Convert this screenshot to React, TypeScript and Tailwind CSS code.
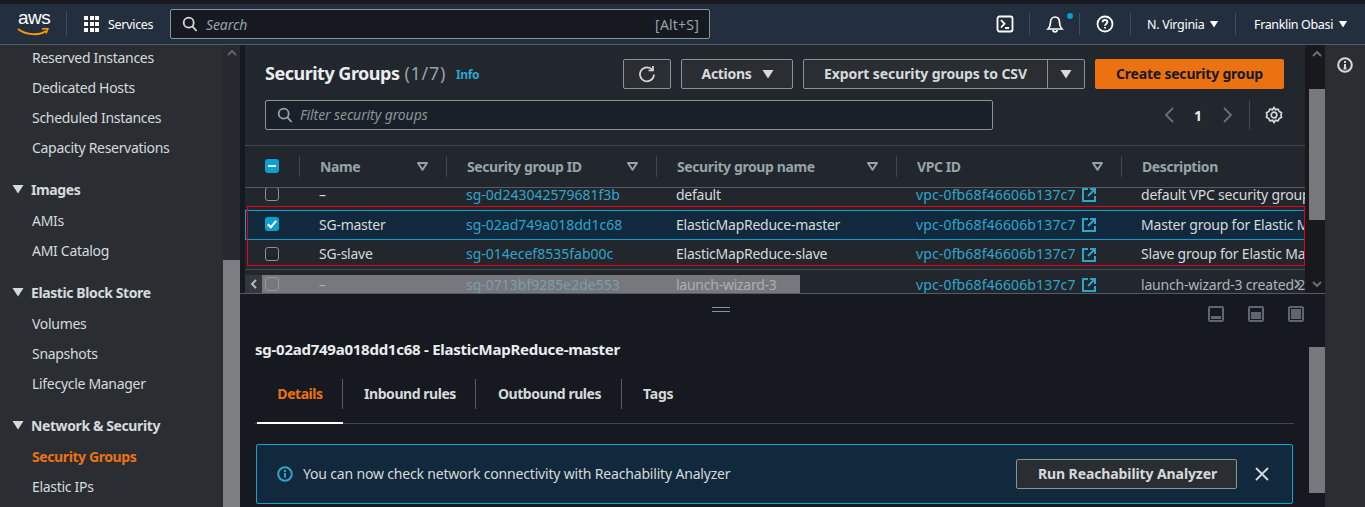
import React from "react";

const Tri = ({ className = "" }: { className?: string }) => (
  <svg width="12" height="10" viewBox="0 0 12 10" className={className}>
    <path d="M0.5 1h11L6 9.5z" fill="currentColor" />
  </svg>
);
const FilterTri = () => (
  <svg width="11" height="9" viewBox="0 0 11 9" className="text-[#95a5a6]">
    <path d="M1 1h9L5.5 7.8z" fill="none" stroke="currentColor" strokeWidth="2" strokeLinejoin="round" />
  </svg>
);
const SearchIcon = ({ c = "text-[#d5dbdb]" }: { c?: string }) => (
  <svg width="16" height="16" viewBox="0 0 16 16" className={c} fill="none" stroke="currentColor" strokeWidth="1.8">
    <circle cx="6.7" cy="6.7" r="5" />
    <path d="M10.4 10.4l4.2 4.6" />
  </svg>
);
const Ext = () => (
  <svg width="14" height="14" viewBox="0 0 14 14" fill="none" stroke="currentColor" strokeWidth="2" className="ml-[6px] mt-[2px] shrink-0">
    <path d="M6 1H1v12h12V8" />
    <path d="M8 1h5v5M13 1L6 8" />
  </svg>
);
const Check = ({ state }: { state: "off" | "on" | "mixed" }) => {
  if (state === "off")
    return <span className="block w-[14px] h-[14px] rounded-[3px] border border-[#879596] bg-transparent" />;
  return (
    <span className="flex items-center justify-center w-[14px] h-[14px] rounded-[3px] bg-[#0aa0d0]">
      <svg width="12" height="12" viewBox="0 0 12 12" fill="none" stroke="#fff" strokeWidth="2">
        {state === "on" ? <path d="M1.8 6.2l3 3 5.4-6.4" /> : <path d="M2 6h8" />}
      </svg>
    </span>
  );
};

const Item = ({ children, active }: { children: React.ReactNode; active?: boolean }) => (
  <div className={`h-[30px] flex items-center pl-[32px] text-[14px] whitespace-nowrap ${active ? "text-[#ec7211] font-bold tracking-[-0.4px]" : "text-[#d5dbdb] tracking-[-0.3px]"}`}>
    {children}
  </div>
);
const Section = ({ title, items, active }: { title: string; items: string[]; active?: string }) => (
  <div className="mt-[12px]">
    <div className="h-[30px] flex items-center pl-[12px] gap-[7px] text-[14px] font-bold text-[#d5dbdb] mb-[1px] tracking-[-0.4px]">
      <Tri className="text-[#d5dbdb] shrink-0" />
      <span className="whitespace-nowrap">{title}</span>
    </div>
    {items.map((i) => (
      <Item key={i} active={i === active}>{i}</Item>
    ))}
  </div>
);

const COLS = "grid grid-cols-[55px_147px_210px_240px_225px_300px]";
const COLS_SEL = "grid grid-cols-[54px_147px_210px_240px_225px_300px]";
const HeadCell = ({ label, divider = true }: { label: string; divider?: boolean }) => (
  <div className="relative flex items-center h-full pl-[20px] pr-[19px] justify-between">
    <span className="text-[14px] font-bold text-[#95a5a6] whitespace-nowrap tracking-[-0.4px]">{label}</span>
    {divider && <FilterTri />}
    <span className="absolute right-0 top-[10px] h-[21px] w-px bg-[#414750]" />
  </div>
);

const Row = ({
  name, id, gname, desc, state = "off", faded, selected, short,
}: { name: string; id: string; gname: string; desc: string; state?: "off" | "on"; faded?: boolean; selected?: boolean; short?: boolean }) => (
  <div className={`${selected ? COLS_SEL : COLS} w-[1177px] ${short ? "h-[29px]" : "h-[30px]"} pb-[2px] items-center text-[14px] whitespace-nowrap ${selected ? "bg-[#12283d] border-y border-l border-[#0aa0d0]" : ""}`}>
    <div className={selected ? "pl-[19px]" : "pl-[20px]"}><Check state={state} /></div>
    <div className="pl-[19px] text-[#d5dbdb] tracking-[-0.25px]">{name}</div>
    <div className="pl-[19px] text-[#2ea6cc] tracking-[0px]">{id}</div>
    <div className="pl-[19px] text-[#d5dbdb] tracking-[-0.25px]">{gname}</div>
    <div className="pl-[19px] flex items-center text-[#2ea6cc] tracking-[0.14px]">vpc-0fb68f46606b137c7<Ext /></div>
    <div className={`pl-[19px] tracking-[-0.2px] ${faded ? "text-[#aab7b8]" : "text-[#d5dbdb]"}`}>{desc}</div>
  </div>
);

const Btn = ({ children, className = "" }: { children: React.ReactNode; className?: string }) => (
  <div className={`h-[30px] flex items-center justify-center border border-[#879596] rounded-[2px] bg-[#2a2e33] text-[14px] font-bold text-[#d5dbdb] whitespace-nowrap ${className}`}>
    {children}
  </div>
);

const NavSep = () => <span className="block w-px h-[22px] bg-[#414d5c]" />;

export default function App() {
  return (
    <div className="w-[1365px] h-[507px] overflow-hidden flex flex-col bg-[#16191f] font-['Noto_Sans','Open_Sans',sans-serif] tracking-[-0.1px]">
      <div className="h-[4px] bg-[#16191f] shrink-0" />
      {/* top navigation */}
      <div className="h-[41px] shrink-0 bg-[#232f3e] border-b border-[#545b64] flex items-center text-white">
        <div className="relative w-[67px] h-full shrink-0">
          <span className="absolute left-[18px] top-[2px] text-[19px] leading-[24px] font-['Liberation_Sans',sans-serif] tracking-[-0.5px]">aws</span>
          <svg width="32" height="10" viewBox="0 0 32 10" className="absolute left-[17px] top-[24px]">
            <path d="M1 1c8 6 21 7 28 2" fill="none" stroke="#ff9900" strokeWidth="2" />
            <path d="M25 1l6-.5-2 5" fill="none" stroke="#ff9900" strokeWidth="1.6" />
          </svg>
          <span className="absolute right-0 top-[7px] w-px h-[25px] bg-[#414d5c]" />
        </div>
        <div className="ml-[17px] grid grid-cols-3 gap-[2px] w-[15px] shrink-0">
          {Array.from({ length: 9 }).map((_, i) => (
            <span key={i} className="w-[4px] h-[4px] bg-white" />
          ))}
        </div>
        <span className="ml-[9px] w-[45px] pt-[2px] text-[12.5px] tracking-[-0.3px] whitespace-nowrap">Services</span>
        <div className="ml-[17px] w-[540px] h-[30px] shrink-0 border border-[#879596] rounded-[2px] bg-[#16191f] flex items-center pl-[11px] pr-[10px]">
          <SearchIcon />
          <span className="ml-[8px] text-[14px] italic text-[#95a5a6]">Search</span>
          <span className="ml-auto text-[14px] text-[#95a5a6] tracking-[0.2px]">[Alt+S]</span>
        </div>
        <div className="ml-auto flex items-center h-full">
          <svg width="18" height="18" viewBox="0 0 18 18" fill="none" stroke="#fff" strokeWidth="1.8">
            <rect x="1.5" y="1.5" width="15" height="15" rx="2" />
            <path d="M5 5l3.5 3.8L5 12.5M9 13h4" />
          </svg>
          <span className="ml-[15px]"><NavSep /></span>
          <div className="relative ml-[16px] w-[18px] h-[18px]">
            <svg width="18" height="18" viewBox="0 0 18 18" fill="none" stroke="#fff" strokeWidth="1.7">
              <path d="M2 14c1.5-1.5 2.500-3 2.500-6.500C4.500 4 6.500 2 9 2s4.500 2 4.500 5.500c0 3.500 1 5 2.500 6.500z" />
              <path d="M7 15c0 2.500 4 2.500 4 0" />
            </svg>
            <span className="absolute -right-[9px] -top-[2px] w-[6px] h-[6px] rounded-full bg-[#0a9bd0]" />
          </div>
          <span className="ml-[15px]"><NavSep /></span>
          <svg width="18" height="18" viewBox="0 0 18 18" fill="none" stroke="#fff" strokeWidth="1.8" className="ml-[16px]">
            <circle cx="9" cy="9" r="7.500" />
            <path d="M6.600 7.200C6.600 5.800 7.700 5 9 5s2.400.8 2.400 2.100c0 1.900-2.400 1.900-2.400 3.700M9 12v1.500" />
          </svg>
          <span className="ml-[16px]"><NavSep /></span>
          <span className="ml-[16px] w-[57px] pt-[2px] text-[12.5px] tracking-[-0.3px] whitespace-nowrap">N. Virginia</span>
          <Tri className="ml-[4px] text-white scale-75" />
          <span className="ml-[15px]"><NavSep /></span>
          <span className="ml-[18px] w-[79px] pt-[2px] text-[12.5px] tracking-[-0.35px] whitespace-nowrap">Franklin Obasi</span>
          <Tri className="ml-[4px] mr-[16px] text-white scale-75" />
        </div>
      </div>

      <div className="flex-1 flex min-h-0">
        {/* sidebar */}
        <div className="w-[223px] shrink-0 bg-[#2a2e33] overflow-hidden">
          <div className="-mt-[3px]">
            <Item>Reserved Instances</Item>
            <Item>Dedicated Hosts</Item>
            <Item>Scheduled Instances</Item>
            <Item>Capacity Reservations</Item>
            <Section title="Images" items={["AMIs", "AMI Catalog"]} />
            <Section title="Elastic Block Store" items={["Volumes", "Snapshots", "Lifecycle Manager"]} />
            <Section title="Network & Security" items={["Security Groups", "Elastic IPs"]} active="Security Groups" />
          </div>
        </div>
        <div className="w-[17px] shrink-0 bg-[#26292e] flex flex-col items-center">
          <svg width="10" height="6" viewBox="0 0 10 6" className="mt-[5px] text-[#5f6670]" fill="none" stroke="currentColor" strokeWidth="2">
            <path d="M1 5l4-4 4 4" />
          </svg>
          <div className="mt-auto w-full h-[247px] bg-[#7d7e82]" />
        </div>

        {/* centre */}
        <div className="w-[1085px] shrink-0 flex flex-col bg-[#16191f]">
          {/* upper panel */}
          <div className="h-[249px] shrink-0 flex pl-[5px] border-b border-[#545b64]">
            <div className="relative w-[1060px] shrink-0 bg-[#22262d] overflow-hidden">
              <div className="h-[101px] border-b border-[#414750] pl-[20px] pr-[21px] pt-[14px]">
                <div className="flex items-center h-[30px]">
                  <span className="pb-[2px] text-[18px] font-bold text-[#eaeded] whitespace-nowrap tracking-[-0.5px]">Security Groups</span>
                  <span className="ml-[5px] pb-[2px] text-[18px] text-[#95a5a6] tracking-[0.7px]">(1/7)</span>
                  <span className="ml-[10px] mt-[2px] text-[12px] font-bold text-[#2ea6cc] tracking-[-0.4px]">Info</span>
                  <div className="ml-auto flex items-center">
                    <Btn className="w-[48px]">
                      <svg width="18" height="18" viewBox="0 0 18 18" fill="none" stroke="#d5dbdb" strokeWidth="1.7">
                        <path d="M14.500 5A7 7 0 1 0 16 9.500" />
                        <path d="M15 1v4.500h-4.500" />
                      </svg>
                    </Btn>
                    <Btn className="w-[112px] ml-[10px] gap-[11px] pl-[2px]"><span className="pb-[2px] tracking-[-0.3px]">Actions</span> <Tri className="text-[#d5dbdb]" /></Btn>
                    <div className="ml-[10px] w-[282px] h-[30px] flex border border-[#879596] rounded-[2px] bg-[#2a2e33] text-[14px] font-bold text-[#d5dbdb]">
                      <div className="w-[244px] pb-[2px] flex items-center justify-center border-r border-[#879596] whitespace-nowrap">Export security groups to CSV</div>
                      <div className="flex-1 flex items-center justify-center"><Tri className="text-[#d5dbdb]" /></div>
                    </div>
                    <div className="ml-[10px] w-[189px] h-[30px] pb-[2px] rounded-[2px] bg-[#ec7211] flex items-center justify-center text-[14px] font-bold text-[#16191f] whitespace-nowrap tracking-[-0.2px]">
                      Create security group
                    </div>
                  </div>
                </div>
                <div className="flex items-center mt-[11px] h-[30px]">
                  <div className="w-[728px] h-[30px] border border-[#879596] rounded-[2px] bg-[#1a2029] flex items-center pl-[11px]">
                    <SearchIcon c="text-[#95a5a6]" />
                    <span className="ml-[7px] pb-[2px] text-[14px] italic text-[#879596]">Filter security groups</span>
                  </div>
                  <div className="ml-auto mr-[1px] flex items-center h-full">
                    <svg width="12" height="18" viewBox="0 0 12 18" fill="none" stroke="#687078" strokeWidth="1.8"><path d="M10 2L3 9l7 7" /></svg>
                    <span className="ml-[18px] w-[10px] text-center text-[14px] font-bold text-[#eaeded]">1</span>
                    <svg width="12" height="18" viewBox="0 0 12 18" fill="none" stroke="#687078" strokeWidth="1.8" className="ml-[19px]"><path d="M2 2l7 7-7 7" /></svg>
                    <span className="ml-[15px] w-px h-[30px] bg-[#414750]" />
                    <svg width="18" height="18" viewBox="0 0 18 18" fill="none" stroke="#d5dbdb" strokeWidth="1.7" className="ml-[15px]">
                      <path d="M9 1.500l1.500 2.200 2.600-.5 1.100 2.300 2.300 1.200L16 9l.5 2.300-2.300 1.200-1.100 2.300-2.600-.5L9 16.500l-1.500-2.200-2.600.5-1.100-2.300-2.300-1.200L2 9l-.5-2.300 2.300-1.200 1.100-2.300 2.600.5z" />
                      <circle cx="9" cy="9" r="2.800" />
                    </svg>
                  </div>
                </div>
              </div>
              {/* table header */}
              <div className={`${COLS} w-[1177px] h-[42px] border-b border-[#545b64]`}>
                <div className="relative pl-[20px] pt-[13px]">
                  <Check state="mixed" />
                  <span className="absolute right-0 top-[10px] h-[21px] w-px bg-[#414750]" />
                </div>
                <HeadCell label="Name" />
                <HeadCell label="Security group ID" />
                <HeadCell label="Security group name" />
                <HeadCell label="VPC ID" />
                <HeadCell label="Description" divider={false} />
              </div>
              {/* rows */}
              <div className="h-[105px] overflow-hidden">
                <div className="-mt-[8px]">
                  <Row name="–" id="sg-0d243042579681f3b" gname="default" desc="default VPC security group" />
                  <Row name="SG-master" id="sg-02ad749a018dd1c68" gname="ElasticMapReduce-master" desc="Master group for Elastic MapReduce" state="on" selected />
                  <Row name="SG-slave" id="sg-014ecef8535fab00c" gname="ElasticMapReduce-slave" desc="Slave group for Elastic MapReduce" short />
                  <div className="h-px bg-[#414750] w-[1177px]" />
                  <Row name="–" id="sg-0713bf9285e2de553" gname="launch-wizard-3" desc="launch-wizard-3 created 2022" faded />
                </div>
              </div>
              {/* selection annotation */}
              <div className="absolute left-[2px] top-[161px] w-[1058px] h-[60px] border border-[#e60012] pointer-events-none" />
              {/* horizontal scrollbar over the last row */}
              <div className="absolute left-0 right-0 bottom-0 h-[18px] flex items-center pointer-events-none">
                <div className="w-[17px] h-full bg-[#3a3d42]/70 flex items-center justify-center">
                  <svg width="7" height="10" viewBox="0 0 7 10" fill="none" stroke="#b5b8bb" strokeWidth="2"><path d="M6 1L2 5l4 4" /></svg>
                </div>
                <div className="w-[538px] h-full bg-[#9a9b9e]/70" />
                <div className="ml-auto mr-[3px] w-[10px] flex justify-center">
                  <svg width="7" height="10" viewBox="0 0 7 10" fill="none" stroke="#9a9b9e" strokeWidth="2"><path d="M1 1l4 4-4 4" /></svg>
                </div>
              </div>
            </div>
            <div className="w-[20px] shrink-0 bg-[#17191d] pl-[4px] flex flex-col items-center">
              <svg width="10" height="6" viewBox="0 0 10 6" className="mt-[6px]" fill="none" stroke="#687078" strokeWidth="2"><path d="M1 5l4-4 4 4" /></svg>
              <div className="mt-[32px] w-full h-[131px] bg-[#77787c]" />
              <svg width="10" height="6" viewBox="0 0 10 6" className="mt-auto mb-[6px]" fill="none" stroke="#687078" strokeWidth="2"><path d="M1 1l4 4 4-4" /></svg>
            </div>
          </div>

          {/* lower panel */}
          <div className="flex-1 flex min-h-0">
            <div className="w-[1069px] shrink-0 overflow-hidden">
              <div className="relative h-[31px] flex items-center justify-end pr-[5px] gap-[24px] pt-[9px]">
                <div className="absolute left-[472px] top-[13px] w-[18px] h-[5px] border-y border-[#879596]" />
                {[
                  "M3 10h10v3H3z",
                  "M3 6h10v7H3z",
                  "M3 3h10v10H3z",
                ].map((d) => (
                  <svg key={d} width="16" height="16" viewBox="0 0 16 16">
                    <rect x="1" y="1" width="14" height="14" rx="1" fill="none" stroke="#5f6670" strokeWidth="2" />
                    <path d={d} fill="#5f6670" />
                  </svg>
                ))}
              </div>
              <div className="pl-[15px] pt-[14px] pb-[1px] text-[15px] font-bold text-[#eaeded] whitespace-nowrap leading-[20px] tracking-[-0.25px]">
                sg-02ad749a018dd1c68 - ElasticMapReduce-master
              </div>
              <div className="ml-[15px] mr-[15px] mt-[4px] h-[60px] flex items-center border-b border-[#414750] relative text-[14px] font-bold text-[#d5dbdb] whitespace-nowrap tracking-[-0.45px]">
                <div className="w-[88px] h-[30px] flex items-center justify-center border-r border-[#545b64] text-[#ec7211] pl-[3px]">Details</div>
                <div className="w-[133px] h-[30px] flex items-center justify-center border-r border-[#545b64] pl-[2px]">Inbound rules</div>
                <div className="w-[146px] h-[30px] flex items-center justify-center border-r border-[#545b64] pl-[2px]">Outbound rules</div>
                <div className="pl-[21px] tracking-[-0.2px]">Tags</div>
                <div className="absolute left-[2px] bottom-[-1px] w-[86px] h-[2px] bg-white" />
              </div>
              <div className="ml-[16px] mr-[16px] mt-[20px] h-[60px] border border-[#0aa5d0] rounded-[2px] bg-[#12283d] flex items-center pl-[20px]">
                <svg width="16" height="16" viewBox="0 0 16 16" fill="none" stroke="#2ea6cc" strokeWidth="2">
                  <circle cx="8" cy="8" r="6.800" />
                  <path d="M8 7v4.500M8 4v2" />
                </svg>
                <span className="ml-[10px] pb-[2px] text-[14px] text-[#d5dbdb] whitespace-nowrap tracking-[-0.18px]">You can now check network connectivity with Reachability Analyzer</span>
                <Btn className="ml-auto w-[221px]"><span className="pb-[2px] pl-[2px]">Run Reachability Analyzer</span></Btn>
                <svg width="14" height="14" viewBox="0 0 14 14" fill="none" stroke="#d5dbdb" strokeWidth="1.800" className="ml-[18px] mr-[23px]">
                  <path d="M1 1l12 12M13 1L1 13" />
                </svg>
              </div>
            </div>
            <div className="w-[16px] shrink-0 flex flex-col">
              <div className="mt-[53px] w-full h-[146px] bg-[#77787c]" />
            </div>
          </div>
        </div>

        {/* right rail */}
        <div className="flex-1 bg-[#2a2e33] flex justify-center pt-[12px]">
          <svg width="16" height="16" viewBox="0 0 16 16" fill="none" stroke="#d5dbdb" strokeWidth="2">
            <circle cx="8" cy="8" r="6.800" />
            <path d="M8 7v4.500M8 4v2M6.500 11.500h3" />
          </svg>
        </div>
      </div>
    </div>
  );
}
